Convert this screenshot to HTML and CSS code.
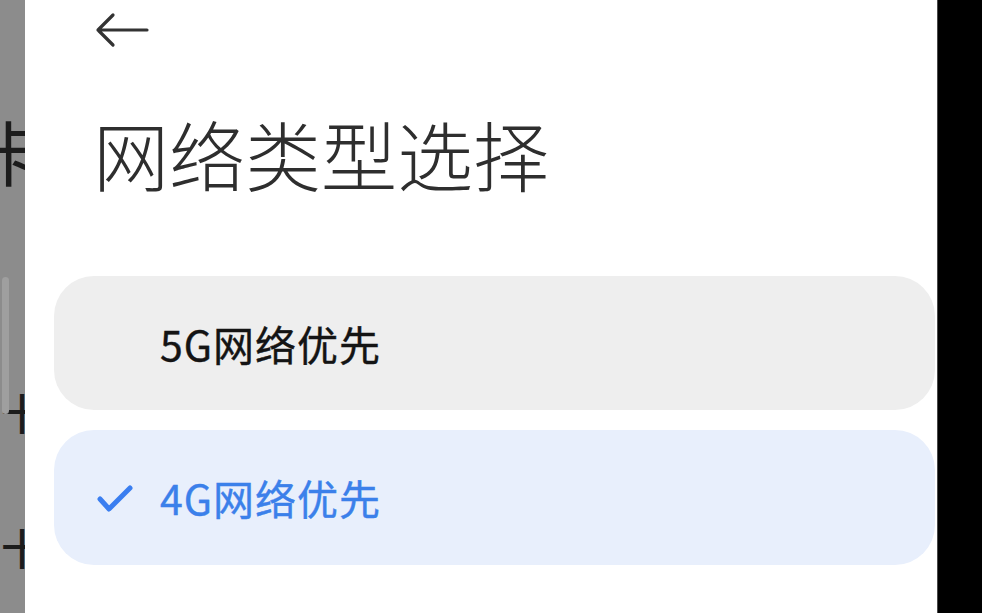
FILE: index.html
```html
<!DOCTYPE html>
<html lang="zh-CN">
<head>
<meta charset="utf-8">
<title>网络类型选择</title>
<link rel="stylesheet" href="styles.css">
</head>
<body>
<div class="screen">
  <aside class="side-left">
    <div class="scrollbar"></div>
    <div class="frag frag-ka">卡</div>
    <div class="frag frag-shi frag-shi-1">十</div>
    <div class="frag frag-shi frag-shi-2">十</div>
  </aside>
  <main class="panel">
    <div class="topbar">
      <svg class="back" width="54" height="36" viewBox="0 0 54 36" aria-label="返回">
        <path d="M52 18 H3 M18 3 L3 18 L18 33" fill="none" stroke="#333" stroke-width="3.2" stroke-linecap="round" stroke-linejoin="round"/>
      </svg>
    </div>
    <h1 class="title">网络类型选择</h1>
    <div class="options">
      <div class="option">
        <span class="check-slot"></span>
        <span class="label">5G网络优先</span>
      </div>
      <div class="option option-selected">
        <span class="check-slot">
          <svg class="check" width="38" height="32" viewBox="0 0 38 32">
            <path d="M4 16 L13 26 L34 5" fill="none" stroke="#3a7ef0" stroke-width="5" stroke-linecap="round" stroke-linejoin="round"/>
          </svg>
        </span>
        <span class="label">4G网络优先</span>
      </div>
    </div>
  </main>
  <div class="side-right"></div>
</div>
</body>
</html>
```
FILE: styles.css
```css
html, body {
  margin: 0;
  padding: 0;
  background: #000;
}
body {
  width: 982px;
  height: 613px;
  overflow: hidden;
  font-family: "Noto Sans CJK SC", "Noto Sans", sans-serif;
}
.screen {
  display: flex;
  width: 982px;
  height: 613px;
}
.side-left {
  position: relative;
  width: 25px;
  flex: 0 0 25px;
  background: #8c8c8c;
  overflow: hidden;
  display: flex;
  flex-direction: column;
}
.scrollbar {
  position: absolute;
  left: 2px;
  top: 277px;
  width: 7px;
  height: 137px;
  border-radius: 4px;
  background: #9f9f9f;
}
.frag {
  color: #1c1c1c;
  white-space: nowrap;
}
.frag-ka {
  font-size: 70px;
  line-height: 70px;
  margin-top: 116px;
  margin-left: -25px;
}
.frag-shi {
  font-size: 42px;
  line-height: 42px;
  margin-left: 1px;
  font-weight: 500;
}
.frag-shi-1 {
  margin-top: 205px;
}
.frag-shi-2 {
  margin-top: 93px;
}
.panel {
  width: 912px;
  flex: 0 0 912px;
  background: #fff;
  display: flex;
  flex-direction: column;
}
.topbar {
  height: 60px;
  padding-left: 70px;
}
.back {
  display: block;
  margin-top: 12px;
}
.title {
  margin: 55px 0 0 0;
  padding-left: 68px;
  font-size: 76px;
  line-height: 76px;
  font-weight: 300;
  color: #2e2e2e;
  letter-spacing: 0;
}
.options {
  margin-top: 85px;
  padding-left: 29px;
  display: flex;
  flex-direction: column;
  gap: 20px;
}
.option {
  width: 881px;
  height: 134px;
  border-radius: 40px;
  background: #eeeeee;
  display: flex;
  align-items: center;
  padding-left: 42px;
  box-sizing: border-box;
}
.option-selected {
  height: 135px;
  background: #e8effc;
}
.check-slot {
  width: 64px;
  display: flex;
  align-items: center;
}
.check {
  display: block;
  margin-top: 2px;
}
.label {
  font-size: 41px;
  line-height: 41px;
  font-weight: 400;
  letter-spacing: 1px;
  color: #141414;
  -webkit-text-stroke: 0.4px currentColor;
}
.option-selected .label {
  color: #3b80ea;
}
.side-right {
  flex: 1;
  background: #000;
  border-left: 1px solid #4a4a4a;
}
```
